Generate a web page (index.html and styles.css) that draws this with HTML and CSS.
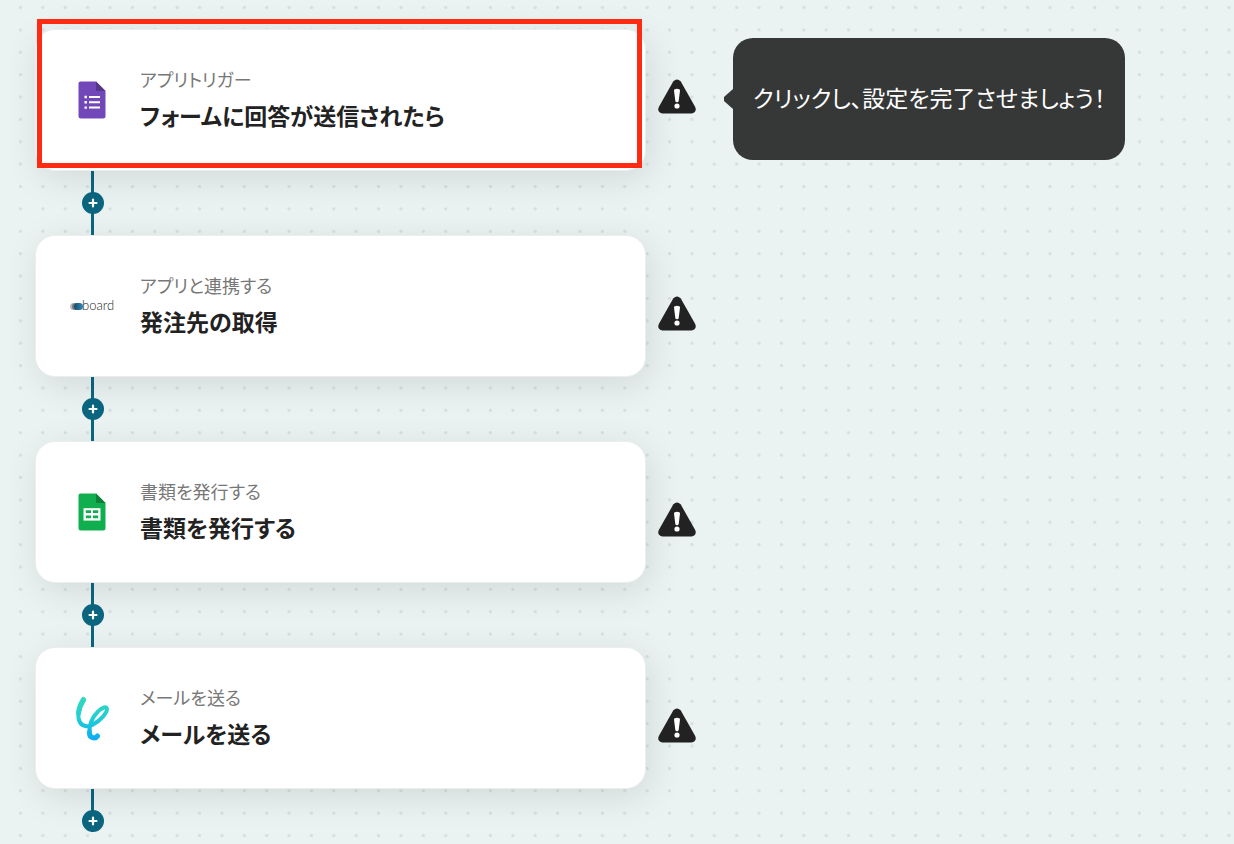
FILE: index.html
```
<!DOCTYPE html>
<html lang="ja">
<head>
  <meta charset="UTF-8" />
  <meta name="viewport" content="width=device-width, initial-scale=1.0"/>
  <title>フロー設定</title>
  <link rel="stylesheet" href="styles.css">
</head>
<body>
  <svg class="dots" aria-hidden="true">
    <defs>
      <pattern id="dot" x="9.3" y="-3.7" width="22.38" height="22.38" patternUnits="userSpaceOnUse">
        <circle cx="11.2" cy="11.2" r="1.7" fill="#d8e0df"/>
      </pattern>
      <symbol id="warning" viewBox="0 0 38 35">
        <path d="M15.2 2.6 Q19 -1.8 22.8 2.6 L37.2 28 Q39.2 33.6 33.5 34.5 H4.5 Q-1.2 33.6 0.8 28 Z" fill="#222"/>
        <path d="M16 11.5 Q16 9.7 19 9.7 Q22 9.7 22 11.5 L20.7 22 Q20.4 23.3 19 23.3 Q17.6 23.3 17.3 22 Z" fill="#fff"/>
        <circle cx="19" cy="27" r="2.6" fill="#fff"/>
      </symbol>
      <symbol id="plus" viewBox="0 0 22 22">
        <path d="M11 7.5v7M7.5 11h7" stroke="#fff" stroke-width="2.2" stroke-linecap="round"/>
      </symbol>
    </defs>
    <rect width="100%" height="100%" fill="url(#dot)"/>
  </svg>

  <main class="flow">
    <div class="step step-active">
      <button type="button" class="card">
        <span class="app-icon">
          <svg width="28" height="38" viewBox="0 0 28 38">
            <path d="M2.5 0.5 H18 L27.5 10 V35 Q27.5 37.5 25 37.5 H3 Q0.5 37.5 0.5 35 V2.5 Q0.5 0.5 2.5 0.5 Z" fill="#7248b9"/>
            <path d="M18 0.5 L27.5 10 H18 Z" fill="#553689"/>
            <path d="M11 16h11M11 21.3h11M11 26.6h11" stroke="#fff" stroke-width="2"/>
            <path d="M6.5 16h2.4M6.5 21.3h2.4M6.5 26.6h2.4" stroke="#fff" stroke-width="2.4"/>
          </svg>
        </span>
        <span class="text">
          <span class="label">アプリトリガー</span>
          <span class="title">フォームに回答が送信されたら</span>
        </span>
      </button>
      <svg class="warning" role="img" aria-label="未設定"><use href="#warning"/></svg>
      <div class="tooltip" role="tooltip">クリックし、設定を完了させましょう！</div>
    </div>

    <div class="connector">
      <button type="button" class="add" aria-label="追加"><svg width="22" height="22"><use href="#plus"/></svg></button>
    </div>

    <div class="step">
      <button type="button" class="card">
        <span class="app-icon">
          <svg width="48" height="16" viewBox="0 0 48 16">
            <defs>
              <linearGradient id="boardBlue" x1="0" x2="1">
                <stop offset="0" stop-color="#174a66"/>
                <stop offset="1" stop-color="#2f8ec2"/>
              </linearGradient>
            </defs>
            <circle cx="5.5" cy="8.5" r="3.5" fill="#b5babd"/>
            <circle cx="7.5" cy="8.5" r="3.5" fill="#71797e"/>
            <rect x="6" y="5" width="9" height="7" rx="3.5" fill="url(#boardBlue)"/>
            <text class="board-text" x="14" y="12">board</text>
          </svg>
        </span>
        <span class="text">
          <span class="label">アプリと連携する</span>
          <span class="title">発注先の取得</span>
        </span>
      </button>
      <svg class="warning" role="img" aria-label="未設定"><use href="#warning"/></svg>
    </div>

    <div class="connector">
      <button type="button" class="add" aria-label="追加"><svg width="22" height="22"><use href="#plus"/></svg></button>
    </div>

    <div class="step">
      <button type="button" class="card">
        <span class="app-icon">
          <svg width="28" height="38" viewBox="0 0 28 38">
            <path d="M2.5 0.5 H18 L27.5 10 V35 Q27.5 37.5 25 37.5 H3 Q0.5 37.5 0.5 35 V2.5 Q0.5 0.5 2.5 0.5 Z" fill="#0fae4f"/>
            <path d="M18 0.5 L27.5 10 H18 Z" fill="#0a8038"/>
            <path d="M5.5 15.2h17v12.4h-17z" fill="#fff"/>
            <path d="M7.8 17.3h5.2v2.8H7.8zM15 17.3h5.2v2.8H15zM7.8 22.4h5.2v2.8H7.8zM15 22.4h5.2v2.8H15z" fill="#0fae4f"/>
          </svg>
        </span>
        <span class="text">
          <span class="label">書類を発行する</span>
          <span class="title">書類を発行する</span>
        </span>
      </button>
      <svg class="warning" role="img" aria-label="未設定"><use href="#warning"/></svg>
    </div>

    <div class="connector">
      <button type="button" class="add" aria-label="追加"><svg width="22" height="22"><use href="#plus"/></svg></button>
    </div>

    <div class="step">
      <button type="button" class="card">
        <span class="app-icon">
          <svg width="36" height="46" viewBox="0 0 36 46">
            <defs>
              <linearGradient id="mailGrad" x1="0" y1="0" x2="0" y2="46" gradientUnits="userSpaceOnUse">
                <stop offset="0" stop-color="#36dcb8"/>
                <stop offset="0.55" stop-color="#20cbd8"/>
                <stop offset="1" stop-color="#0aaaf8"/>
              </linearGradient>
            </defs>
            <g fill="none" stroke="url(#mailGrad)" stroke-linecap="round" stroke-linejoin="round">
              <path d="M10 5 C5 12 3 21 5.5 26.5 C8 31.5 14 32.5 19 29.5 C27 25 33 18 33 14 C33 11 28 12 24 16.5 C18 22.5 15 31 15.5 38" stroke-width="4"/>
              <path d="M9.5 4.5 C6.5 9 5 13 4.5 18" stroke-width="5"/>
              <path d="M15.5 37 C15 43.5 21.5 44 23.5 41" stroke-width="5"/>
            </g>
          </svg>
        </span>
        <span class="text">
          <span class="label">メールを送る</span>
          <span class="title">メールを送る</span>
        </span>
      </button>
      <svg class="warning" role="img" aria-label="未設定"><use href="#warning"/></svg>
    </div>

    <div class="connector connector-last">
      <button type="button" class="add" aria-label="追加"><svg width="22" height="22"><use href="#plus"/></svg></button>
    </div>
  </main>
</body>
</html>
```

FILE: styles.css
```
* {
  box-sizing: border-box;
}
body {
  margin: 0;
  min-height: 100vh;
  position: relative;
  background-color: #eaf3f2;
  color: #222;
  font-family: "Noto Sans CJK JP", sans-serif;
  font-feature-settings: "palt";
}
button {
  font: inherit;
  color: inherit;
  cursor: pointer;
}
.dots {
  position: absolute;
  top: 0;
  left: 0;
  width: 100%;
  height: 100%;
}
.flow {
  position: relative;
  padding: 29px 24px 0 35px;
}
.step {
  display: flex;
  align-items: center;
  gap: 12px;
  position: relative;
}
.card {
  display: flex;
  align-items: center;
  gap: 24px;
  flex: 0 1 611px;
  height: 142px;
  padding: 0 32px;
  background: white;
  border: 1px solid #eceeee;
  border-radius: 20px;
  box-shadow: 4px 8px 36px rgba(0, 0, 0, 0.1);
  text-align: left;
}
.app-icon {
  display: flex;
  justify-content: center;
  width: 48px;
}
.board-text {
  font-family: Lato, sans-serif;
  font-size: 13px;
  font-weight: 300;
  fill: #222;
}
.text {
  display: flex;
  flex-direction: column;
  gap: 6px;
  padding-bottom: 2px;
}
.label {
  font-size: 18px;
  line-height: 26px;
  color: #777;
}
.title {
  font-size: 23px;
  line-height: 34px;
  font-weight: 600;
}
.warning {
  flex: none;
  width: 38px;
  height: 35px;
  margin-top: 14px;
}
/* red frame round the step that has to be set up next */
.step-active::after {
  content: "";
  position: absolute;
  box-sizing: border-box;
  top: -10px;
  left: 2px;
  width: 605px;
  height: 149px;
  border: 5px solid #ff2a12;
  pointer-events: none;
}
.step-active .warning {
  margin-top: 0;
  margin-bottom: 8px;
}
.tooltip {
  position: relative;
  margin-left: 25px;
  margin-bottom: 2px;
  padding: 43px 20px 47px;
  border-radius: 20px;
  background: rgba(34, 34, 34, 0.9);
  color: white;
  font-size: 23px;
  line-height: 32px;
}
.tooltip::before {
  content: "";
  position: absolute;
  top: 51px;
  left: -9px;
  width: 9px;
  height: 20px;
  background: rgba(34, 34, 34, 0.9);
  clip-path: polygon(100% 0, 100% 100%, 0 60%, 0 40%);
}
.connector {
  display: flex;
  align-items: center;
  justify-content: center;
  width: 22px;
  height: 64px;
  margin-left: 47px;
  background: linear-gradient(#0c6680, #0c6680) 9px 0 / 3px 100% no-repeat;
}
.connector-last {
  height: 43px;
  align-items: flex-end;
}
.add {
  display: block;
  width: 22px;
  height: 22px;
  padding: 0;
  border: none;
  border-radius: 50%;
  background: #0c6680;
}
.add svg {
  display: block;
}
```
